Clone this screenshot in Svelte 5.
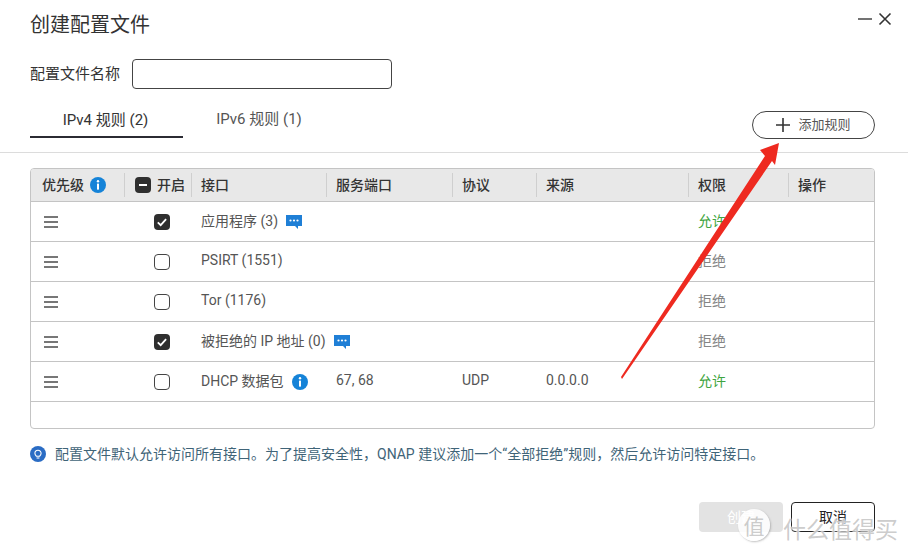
<script>
  const rows = [
    { name: "应用程序 (3)", on: true, badge: "chat", perm: "允许" },
    { name: "PSIRT (1551)", on: false, perm: "拒绝" },
    { name: "Tor (1176)", on: false, perm: "拒绝" },
    { name: "被拒绝的 IP 地址 (0)", on: true, badge: "chat", perm: "拒绝" },
    { name: "DHCP 数据包", on: false, badge: "info", ports: "67, 68", proto: "UDP", src: "0.0.0.0", perm: "允许" }
  ];
</script>

{#snippet info()}
  <svg class="icon" viewBox="0 0 16 16" width="16" height="16">
    <circle cx="8" cy="8" r="8" fill="#1583d8" />
    <circle cx="8" cy="4.3" r="1.2" fill="#fff" />
    <rect x="7" y="6.6" width="2" height="6" fill="#fff" />
  </svg>
{/snippet}

{#snippet chat()}
  <svg class="icon" viewBox="0 0 16 16" width="16" height="16">
    <path d="M0 1h16v11h-4v3l-3-3H0z" fill="#1f7fd6" />
    <circle cx="4.5" cy="6.5" r="1.1" fill="#fff" />
    <circle cx="8" cy="6.5" r="1.1" fill="#fff" />
    <circle cx="11.5" cy="6.5" r="1.1" fill="#fff" />
  </svg>
{/snippet}

<div class="dialog">
  <header class="title-bar">
    <h1>创建配置文件</h1>
    <div class="win-btns">
      <svg viewBox="0 0 14 14" width="14" height="14"><path d="M0 7h14" stroke="#444" stroke-width="1.5" /></svg>
      <svg viewBox="0 0 14 14" width="14" height="14"><path d="M1.5 1.5l11 11M12.5 1.5l-11 11" stroke="#333" stroke-width="1.6" /></svg>
    </div>
  </header>

  <div class="name-row">
    <label for="profile">配置文件名称</label>
    <input id="profile" type="text" />
  </div>

  <div class="tabs-row">
    <div class="tabs">
      <div class="tab active">IPv4 规则 (2)</div>
      <div class="tab">IPv6 规则 (1)</div>
    </div>
    <button class="add-btn">
      <svg viewBox="0 0 14 14" width="14" height="14"><path d="M7 0v14M0 7h14" stroke="#333" stroke-width="1.6" /></svg>
      <span>添加规则</span>
    </button>
  </div>

  <div class="table">
    <div class="row head">
      <div class="cell"><span>优先级</span>{@render info()}</div>
      <div class="cell c-on">
        <span class="minus"></span>
        <span>开启</span>
      </div>
      <div class="cell">接口</div>
      <div class="cell">服务端口</div>
      <div class="cell">协议</div>
      <div class="cell">来源</div>
      <div class="cell">权限</div>
      <div class="cell">操作</div>
    </div>

    {#each rows as r}
      <div class="row">
        <div class="cell c-drag"><span class="drag"><i></i><i></i><i></i></span></div>
        <div class="cell c-check">
          <span class="check" class:on={r.on}>
            {#if r.on}
              <svg viewBox="0 0 16 16" width="16" height="16"><path d="M3.8 8.3l2.9 2.9 5.4-6" fill="none" stroke="#fff" stroke-width="1.8" /></svg>
            {/if}
          </span>
        </div>
        <div class="cell">
          <span>{r.name}</span>
          {#if r.badge === "chat"}{@render chat()}{/if}
          {#if r.badge === "info"}{@render info()}{/if}
        </div>
        <div class="cell">{r.ports ?? ""}</div>
        <div class="cell">{r.proto ?? ""}</div>
        <div class="cell">{r.src ?? ""}</div>
        <div class="cell" class:allow={r.perm === "允许"} class:deny={r.perm === "拒绝"}>{r.perm}</div>
        <div class="cell"></div>
      </div>
    {/each}
    <div class="row empty"></div>
  </div>

  <div class="hint">
    <svg class="icon" viewBox="0 0 16 16" width="16" height="16">
      <circle cx="8" cy="8" r="8" fill="#2a6cc4" />
      <path d="M6.4 10.2C5.4 9.4 4.9 8.4 4.9 7.3a3.1 3.1 0 0 1 6.2 0c0 1.1-.5 2.1-1.5 2.9z" fill="none" stroke="#fff" stroke-width="1.1" />
      <path d="M6.6 12h2.8" stroke="#fff" stroke-width="1.1" />
    </svg>
    <span>配置文件默认允许访问所有接口。为了提高安全性，QNAP 建议添加一个“全部拒绝”规则，然后允许访问特定接口。</span>
  </div>

  <footer class="actions">
    <button class="create">创建</button>
    <button class="cancel">取消</button>
  </footer>

  <svg class="arrow" viewBox="0 0 908 549" width="908" height="549">
    <path d="M779 143L760 150L765 156L621 377L622 379L772 161L775 165z" fill="#ee2a20" />
  </svg>

  <div class="watermark">
    <span class="wm-badge">值</span>
    <span class="wm-text">什么值得买</span>
  </div>
</div>

<style>
  :global(body) {
    background: #fff;
  }

  .dialog {
    position: relative;
    width: 908px;
    height: 549px;
    overflow: hidden;
    background: #fff;
    color: #333;
    font-family: Roboto, "Noto Sans CJK SC", sans-serif;
    font-size: 14px;
  }

  .title-bar {
    display: flex;
    justify-content: space-between;
    padding: 12px 16px 0 30px;
    height: 48px;
    box-sizing: border-box;
  }

  h1 {
    margin: 0;
    font-size: 20px;
    font-weight: 400;
    line-height: 27px;
  }

  .win-btns {
    display: flex;
    gap: 6px;
  }

  .name-row {
    display: flex;
    align-items: center;
    gap: 12px;
    padding-left: 30px;
    height: 30px;
    margin-top: 11px;
    font-size: 15px;
  }

  .name-row label {
    margin-bottom: 3px;
  }

  .name-row input {
    width: 260px;
    height: 30px;
    box-sizing: border-box;
    border: 1px solid #444;
    border-radius: 4px;
    background: #fff;
  }

  .tabs-row {
    display: flex;
    justify-content: space-between;
    align-items: flex-start;
    height: 51px;
    margin-top: 13px;
    padding: 0 33px 0 30px;
    border-bottom: 1px solid #dcdcdc;
    box-sizing: border-box;
  }

  .tabs {
    display: flex;
    gap: 33px;
  }

  .tab {
    width: 86px;
    height: 36px;
    box-sizing: border-box;
    padding-top: 7px;
    line-height: 20px;
    font-size: 15px;
    text-align: center;
    color: #555;
    white-space: nowrap;
  }

  .tab.active {
    width: 153px;
    padding-top: 8px;
    padding-right: 2px;
    color: #333;
    border-bottom: 2px solid #2b2b33;
  }

  .add-btn {
    display: flex;
    align-items: center;
    justify-content: center;
    gap: 8px;
    width: 123px;
    height: 28px;
    margin-top: 9px;
    box-sizing: border-box;
    border: 1px solid #444;
    border-radius: 14px;
    background: #fff;
    color: #555;
    font: inherit;
    font-size: 13px;
  }

  .add-btn span {
    margin-bottom: 3px;
  }

  .table {
    width: 845px;
    margin: 15px 0 0 30px;
    box-sizing: border-box;
    border: 1px solid #c4c4c4;
    border-radius: 4px;
    overflow: hidden;
  }

  .row {
    display: grid;
    grid-template-columns: 93px 67px 135px 126px 84px 152px 100px 86px;
    height: 39px;
    border-bottom: 1px solid #c4c4c4;
  }

  .row.head {
    height: 32px;
    background: #e8e8e8;
  }

  .row.empty {
    grid-template-columns: 1fr;
    height: 26px;
    border-bottom: 0;
  }

  .cell {
    display: flex;
    align-items: center;
    gap: 8px;
    padding: 0 0 3px 10px;
    color: #555;
    white-space: nowrap;
    min-width: 0;
  }

  .cell .icon,
  .cell .minus {
    margin-top: 3px;
  }

  .head .cell {
    color: #333;
    font-weight: 500;
    position: relative;
    gap: 6px;
  }

  .head .cell:first-child {
    padding-left: 11px;
  }

  .head .cell:not(:first-child)::before {
    content: "";
    position: absolute;
    left: 0;
    top: 4px;
    bottom: 4px;
    width: 1px;
    background: #cfcfcf;
  }

  .cell.c-on {
    padding-left: 11px;
  }

  .cell.c-drag {
    padding-bottom: 0;
  }

  .cell.c-check {
    padding: 0 0 0 30px;
  }

  .icon {
    flex-shrink: 0;
  }

  .drag {
    display: flex;
    flex-direction: column;
    gap: 3px;
    margin-left: 3px;
  }

  .drag i {
    display: block;
    width: 14px;
    height: 2px;
    background: #777;
  }

  .minus {
    position: relative;
    flex-shrink: 0;
    width: 16px;
    height: 16px;
    border-radius: 4px;
    background: #2f2f2f;
  }

  .minus::after {
    content: "";
    position: absolute;
    left: 4px;
    right: 4px;
    top: 7px;
    height: 2px;
    background: #fff;
  }

  .check {
    flex-shrink: 0;
    width: 16px;
    height: 16px;
    box-sizing: border-box;
    border: 1px solid #444;
    border-radius: 4px;
    background: #fff;
  }

  .check.on {
    border: 0;
    background: #2f2f2f;
  }

  .check svg {
    display: block;
  }

  .cell.allow {
    color: #3fa53f;
  }

  .cell.deny {
    color: #858585;
  }

  .hint {
    display: flex;
    align-items: center;
    gap: 9px;
    margin: 15px 0 0 30px;
    color: #3f6478;
    height: 20px;
    white-space: nowrap;
  }

  .hint span {
    margin-bottom: 3px;
  }

  .actions {
    display: flex;
    justify-content: flex-end;
    gap: 8px;
    padding-right: 33px;
    margin-top: 38px;
  }

  .actions button {
    width: 84px;
    height: 30px;
    padding: 0 0 3px;
    border-radius: 4px;
    font: inherit;
  }

  .create {
    border: 0;
    background: #e3e3e3;
    color: #fff;
  }

  .cancel {
    border: 1px solid #222;
    background: #fff;
    color: #222;
  }

  .arrow {
    position: absolute;
    inset: 0;
    pointer-events: none;
  }

  .watermark {
    position: absolute;
    left: 738px;
    top: 505px;
    display: flex;
    align-items: center;
    gap: 13px;
    color: rgba(175, 175, 175, 0.65);
    pointer-events: none;
  }

  .wm-badge {
    width: 32px;
    height: 32px;
    box-sizing: border-box;
    border-radius: 50%;
    display: flex;
    align-items: center;
    justify-content: center;
    box-shadow: 1px 1px 2px rgba(150, 150, 150, 0.6);
    background: rgba(255, 255, 255, 0.85);
    font-size: 21px;
  }

  .wm-text {
    margin-top: 6px;
    font-size: 23px;
    text-shadow: 0 0 2px #fff, 0 0 2px #fff;
  }
</style>
